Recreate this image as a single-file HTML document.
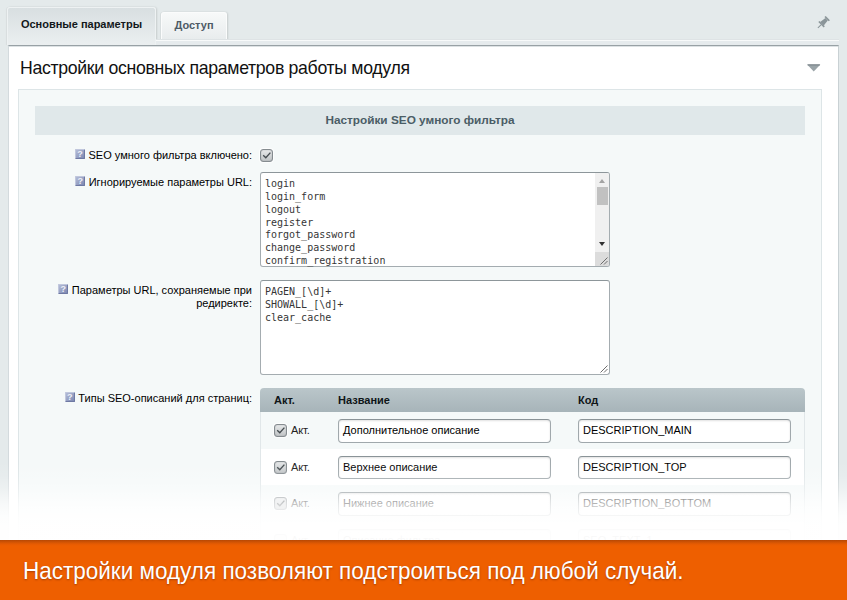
<!DOCTYPE html>
<html lang="ru">
<head>
<meta charset="utf-8">
<title>Настройки модуля</title>
<style>
html,body{margin:0;padding:0;}
body{width:847px;height:600px;overflow:hidden;position:relative;background:#e4eaeb;
 font-family:"Liberation Sans",Arial,sans-serif;font-size:12px;color:#000;}
.abs{position:absolute;}
/* tabs */
.tab{position:absolute;box-sizing:border-box;text-align:center;font-weight:bold;font-size:11px;white-space:nowrap;}
#tab1{left:7px;top:7px;width:149px;height:38px;line-height:32px;color:#12171a;
 background:linear-gradient(#d8dfe1,#ebeff0);border:1px solid #eef2f3;border-bottom:none;border-radius:3px 3px 0 0;
 box-shadow:1px 0 2px rgba(0,0,0,.13),-1px 0 1px rgba(0,0,0,.05);}
#tab2{left:161px;top:12px;width:66px;height:28px;line-height:24px;color:#4e5b66;
 background:linear-gradient(#f7f9f9,#e8eced);border:1px solid #fbfcfc;border-bottom:none;border-radius:3px 3px 0 0;
 box-shadow:1px 0 2px rgba(0,0,0,.13),-1px 0 1px rgba(0,0,0,.06);}
#strip{left:156px;top:39px;width:683px;height:7px;box-sizing:border-box;border-top:1px solid #dee3e5;background:#e6ebed;box-shadow:inset 0 1px 0 #f8fafa;}
/* main panel */
#panel{left:8px;top:45px;width:831px;height:520px;background:#fff;border-top:1px solid #98a1a5;border-right:1px solid #c9d1d4;border-left:1px solid #d3dadd;box-sizing:border-box;box-shadow:inset 0 1px 0 #dde2e4;}
#title{left:20px;top:55.5px;font-size:17.7px;letter-spacing:-.32px;line-height:24px;color:#111;white-space:nowrap;}
#arrow{left:807px;top:65px;width:0;height:0;border-left:7px solid transparent;border-right:7px solid transparent;border-top:7px solid #8f9ba0;}
#inner{left:18px;top:89px;width:804px;height:480px;box-sizing:border-box;background:#f5f9f9;border:1px solid #dde5e7;}
#hbar{left:35px;top:106px;width:770px;height:29px;background:#e0e8ea;text-align:center;line-height:28px;font-weight:bold;font-size:11.8px;color:#4b5d66;}
.lbl{position:absolute;right:595px;text-align:right;font-size:11px;line-height:14px;color:#000;white-space:nowrap;}
.q{display:inline-block;width:10px;height:10px;margin-right:3px;vertical-align:0;overflow:hidden;position:relative;left:-.5px;background:linear-gradient(135deg,#b4bcd6,#7d89b3);border:1px solid;border-color:#c0c7dd #6e79a3 #6e79a3 #c0c7dd;box-sizing:border-box;
 color:#eef0f8;font-size:9px;line-height:8px;font-weight:bold;text-align:center;border-radius:1px;}
.cb{position:absolute;width:13px;height:13px;box-sizing:border-box;border:1px solid #858c90;border-radius:3px;background:linear-gradient(#e6e8e9,#c0c4c6);box-shadow:0 0 0 1px rgba(255,255,255,.75),inset 0 0 1px 0 #7d8488;}
.cb svg{position:absolute;left:-1px;top:-1px;}
.ta{position:absolute;left:260px;width:350px;height:95px;box-sizing:border-box;border:1px solid #a4acb0;border-top-color:#8d969a;border-radius:3px;background:#fff;
 font-family:"DejaVu Sans Mono","Liberation Mono",monospace;font-size:10px;line-height:12.84px;color:#363636;padding:5px 4px;white-space:pre;overflow:visible;}

.sb{position:absolute;right:0;top:0;width:14px;height:93px;background:#f0f0f0;border-radius:0 2px 2px 0;}
.sb i{position:absolute;display:block;}
.sb .up{left:4px;top:6px;width:0;height:0;border-left:3.5px solid transparent;border-right:3.5px solid transparent;border-bottom:4px solid #a3a3a3;}
.sb .th{left:2px;top:14px;width:10.5px;height:18px;background:#c1c1c1;}
.sb .dn{left:4px;top:69px;width:0;height:0;border-left:3.5px solid transparent;border-right:3.5px solid transparent;border-top:4px solid #303030;}
.sb .co{left:0;top:79px;width:14px;height:14px;background:#dcdcdc;border-radius:0 0 2px 0;}
.grip{position:absolute;right:1px;bottom:1px;}
/* table */
#thead{left:260px;top:388px;width:545px;height:24px;background:linear-gradient(#bac6ca,#a7b4b9);border-radius:4px 4px 0 0;font-weight:bold;font-size:11px;line-height:24px;color:#0f1518;}
#thead span{position:absolute;top:0;}
.row{position:absolute;left:260px;width:545px;height:36.7px;box-shadow:inset 1px 0 0 #e1e7e9,inset -1px 0 0 #e1e7e9;}
.row .t{position:absolute;left:31px;top:11px;font-size:11px;line-height:14px;color:#222;letter-spacing:-.15px;}
.inp{position:absolute;top:7px;height:23.5px;width:213px;box-sizing:border-box;border:1px solid #a0a8ac;border-top-color:#8a9397;border-radius:4px;background:#fff;
 font-size:11px;line-height:21px;padding:0 0 0 4px;color:#000;white-space:nowrap;box-shadow:inset 0 1px 2px rgba(0,0,0,.12);}
#fade{left:0;top:400px;width:847px;height:141px;background:linear-gradient(rgba(255,255,255,0) 0,rgba(255,255,255,0) 44%,rgba(255,255,255,.12) 54%,rgba(255,255,255,.32) 62.4%,rgba(255,255,255,.72) 73.8%,rgba(255,255,255,.9) 82.3%,rgba(255,255,255,.955) 88.7%,rgba(255,255,255,.975) 100%);}
#banner{left:0;top:540px;width:847px;height:60px;background:linear-gradient(#b64803 0,#cf5304 2px,#e55b02 4px,#ee5f00 6px,#ee5f00 100%);}
#btxt{left:23px;top:555px;font-size:24.4px;transform-origin:0 0;transform:scaleX(.922);line-height:32px;color:#fff;white-space:nowrap;text-shadow:0 1px 2px rgba(120,40,0,.6);}
</style>
</head>
<body>
<div class="tab" id="tab1">Основные параметры</div>
<div class="tab" id="tab2">Доступ</div>
<div class="abs" id="strip"></div>
<div class="abs" id="panel"></div>
<svg class="abs" style="left:810px;top:10px" width="30" height="24" viewBox="810 10 30 24"><g transform="translate(822.7 23.1) rotate(45)" fill="#8a9599"><rect x="-3" y="-7.2" width="6" height="1.7"/><polygon points="-1.7,-5.5 1.7,-5.5 2.5,1 -2.5,1"/><rect x="-3.8" y="0.8" width="7.6" height="1.6"/><rect x="-0.5" y="2.4" width="1" height="4.4"/></g></svg>
<div class="abs" id="title">Настройки основных параметров работы модуля</div>
<svg class="abs" style="left:800px;top:60px" width="30" height="16" viewBox="800 60 30 16"><polygon points="807.1,64.4 820.4,64.4 813.75,71.6" fill="#9aa4a8"/><rect x="807.6" y="64.4" width="12.3" height="1" fill="#737d82"/></svg>
<div class="abs" id="inner"></div>
<div class="abs" id="hbar">Настройки SEO умного фильтра</div>

<div class="lbl" style="top:148px"><span class="q">?</span>SEO умного фильтра включено:</div>
<div class="cb" style="left:259.5px;top:149px"><svg width="13" height="13" viewBox="0 0 13 13"><path d="M3.2 6.3 L5.8 8.8 L10.4 3.6" fill="none" stroke="#454c50" stroke-width="1.35"/></svg></div>

<div class="lbl" style="top:175px"><span class="q">?</span>Игнорируемые параметры URL:</div>
<div class="ta" style="top:172px">login
login_form
logout
register
forgot_password
change_password
confirm_registration<div class="sb"><i class="up"></i><i class="th"></i><i class="dn"></i><i class="co"></i></div><svg class="grip" width="8" height="8" viewBox="0 0 8 8"><path d="M0.5 7.5 L7.5 0.5 M4 7.5 L7.5 4" stroke="#6e6e6e" stroke-width="1" fill="none"/></svg></div>

<div class="lbl" style="top:284px;white-space:normal;width:200px;line-height:13px"><span class="q">?</span>Параметры URL, сохраняемые при редиректе:</div>
<div class="ta" style="top:280px">PAGEN_[\d]+
SHOWALL_[\d]+
clear_cache<svg class="grip" width="8" height="8" viewBox="0 0 8 8"><path d="M0.5 7.5 L7.5 0.5 M4 7.5 L7.5 4" stroke="#6e6e6e" stroke-width="1" fill="none"/></svg></div>

<div class="lbl" style="top:391px"><span class="q">?</span>Типы SEO-описаний для страниц:</div>

<div class="abs" id="thead"><span style="left:14px">Акт.</span><span style="left:78px">Название</span><span style="left:318px">Код</span></div>
<div class="row" style="top:412px;background:#f5f9f9"><div class="cb" style="left:14px;top:12px"><svg width="13" height="13" viewBox="0 0 13 13"><path d="M3.2 6.3 L5.8 8.8 L10.4 3.6" fill="none" stroke="#454c50" stroke-width="1.35"/></svg></div><div class="t">Акт.</div><div class="inp" style="left:78px">Дополнительное описание</div><div class="inp" style="left:318px">DESCRIPTION_MAIN</div></div>
<div class="row" style="top:448.7px;background:#fff"><div class="cb" style="left:14px;top:12px"><svg width="13" height="13" viewBox="0 0 13 13"><path d="M3.2 6.3 L5.8 8.8 L10.4 3.6" fill="none" stroke="#454c50" stroke-width="1.35"/></svg></div><div class="t">Акт.</div><div class="inp" style="left:78px">Верхнее описание</div><div class="inp" style="left:318px">DESCRIPTION_TOP</div></div>
<div class="row" style="top:485.4px;background:#f5f9f9"><div class="cb" style="left:14px;top:12px"><svg width="13" height="13" viewBox="0 0 13 13"><path d="M3.2 6.3 L5.8 8.8 L10.4 3.6" fill="none" stroke="#454c50" stroke-width="1.35"/></svg></div><div class="t">Акт.</div><div class="inp" style="left:78px">Нижнее описание</div><div class="inp" style="left:318px">DESCRIPTION_BOTTOM</div></div>
<div class="row" style="top:522.1px;background:#fff"><div class="cb" style="left:14px;top:12px"></div><div class="t">Акт.</div><div class="inp" style="left:78px">Описание фильтра</div><div class="inp" style="left:318px">SEO_TEXT_1</div></div>

<div class="abs" id="fade"></div>
<div class="abs" id="banner"></div>
<div class="abs" id="btxt">Настройки модуля позволяют подстроиться под любой случай.</div>
</body>
</html>
